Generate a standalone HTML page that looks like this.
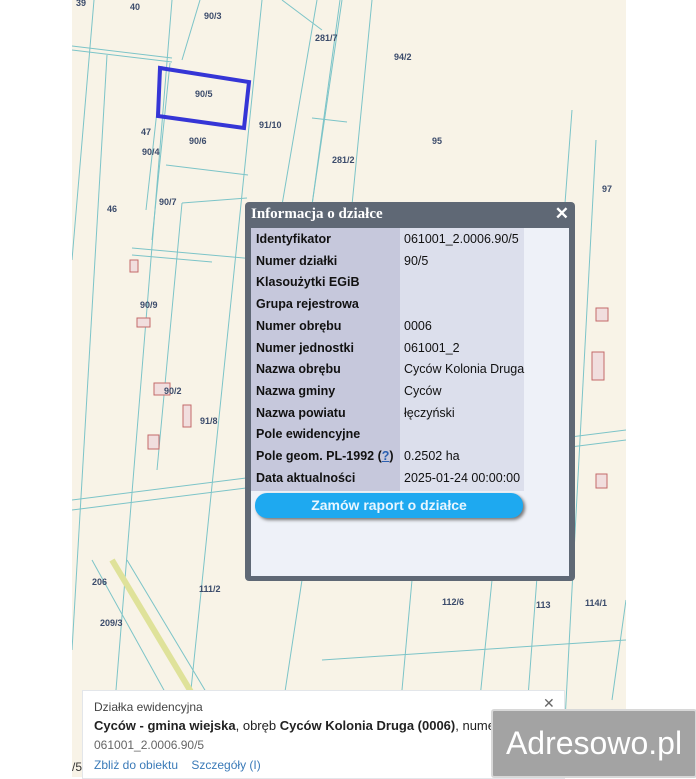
<!DOCTYPE html>
<html><head><meta charset="utf-8"><style>
body{margin:0;width:696px;height:777px;background:#fff;position:relative;overflow:hidden;font-family:"Liberation Sans",Arial,sans-serif}
.map{position:absolute;left:72px;top:0;width:554px;height:777px;background:#f8f3e7;overflow:hidden}
.pop{position:absolute;left:245px;top:202px;width:330px;height:379px;background:#5f6875;border-radius:4px}
.pop .t{position:absolute;left:6px;top:4px;color:#fff;font:bold 15px "Liberation Serif",serif}
.pop .x{position:absolute;right:6px;top:2px;color:#fff;font:bold 17px "Liberation Sans";}
.body{position:absolute;left:6px;top:26px;width:318px;height:348px;background:#eef1f8}
.lab{position:absolute;left:0;top:0;width:149px;height:263px;background:#c6c8dc}
.val{position:absolute;left:149px;top:0;width:124px;height:263px;background:#dcdfec}
.r{position:absolute;left:5px;font-size:12.5px;color:#111;height:21.7px;line-height:21.7px}
.lb{font-weight:bold}
.btn{position:absolute;left:4px;top:265px;width:268px;height:25px;background:#1ea9f0;border-radius:12px;color:#e8f6ff;font:bold 14px "Liberation Sans";text-align:center;line-height:25px;box-shadow:2px 2px 3px #777}
.info{position:absolute;left:82px;top:690px;width:481px;height:87px;background:#fff;border:1px solid #e3e6ea;font-size:12px;color:#333}
.logo{position:absolute;left:491px;top:709px;width:202px;height:65px;background:#a3a3a3;border:2px solid #d8d8d8;border-radius:3px;color:#fff;font-size:32px;line-height:65px;text-align:center}
.lbl{position:absolute;font:bold 9px "Liberation Sans";color:#3b4b6b}
</style></head><body>
<div class="map">
<svg width="554" height="777" style="position:absolute;left:0;top:0" stroke="#7cc4c8" fill="none" stroke-width="1">
<line x1="22" y1="0" x2="0" y2="260"/><line x1="35" y1="55" x2="0" y2="650"/>
<line x1="0" y1="50" x2="100" y2="62"/><line x1="0" y1="46" x2="100" y2="58"/>
<line x1="90" y1="66" x2="74" y2="210"/><line x1="98" y1="63" x2="80" y2="240"/>
<line x1="100" y1="0" x2="44" y2="690"/><line x1="128" y1="0" x2="110" y2="60"/>
<line x1="190" y1="0" x2="110" y2="777"/>
<line x1="94" y1="165" x2="176" y2="175"/><line x1="110" y1="203" x2="175" y2="198"/><line x1="110" y1="203" x2="85" y2="470"/>
<line x1="60" y1="248" x2="250" y2="265"/><line x1="60" y1="255" x2="140" y2="262"/>
<line x1="245" y1="0" x2="210" y2="205"/><line x1="268" y1="0" x2="240" y2="205"/>
<line x1="300" y1="0" x2="280" y2="205"/><line x1="210" y1="0" x2="250" y2="30"/>
<line x1="240" y1="118" x2="275" y2="122"/><line x1="270" y1="0" x2="240" y2="205"/>
<line x1="0" y1="500" x2="554" y2="430"/><line x1="0" y1="510" x2="554" y2="440"/>
<line x1="500" y1="110" x2="450" y2="777"/><line x1="524" y1="140" x2="490" y2="777"/>
<line x1="40" y1="560" x2="170" y2="777" stroke="#dfe29a" stroke-width="6"/>
<line x1="20" y1="560" x2="140" y2="777"/><line x1="55" y1="560" x2="185" y2="777"/>
<line x1="230" y1="580" x2="200" y2="777"/><line x1="340" y1="580" x2="330" y2="690"/>
<line x1="420" y1="580" x2="400" y2="777"/><line x1="554" y1="600" x2="540" y2="700"/>
<line x1="250" y1="660" x2="554" y2="640"/>
<polygon points="88,68 177,82 172,128 86,116" stroke="#3535d6" stroke-width="4"/>
<g stroke="#c36a6a" fill="#f1dede"><rect x="65" y="318" width="13" height="9"/><rect x="58" y="260" width="8" height="12"/><rect x="82" y="383" width="16" height="12"/><rect x="111" y="405" width="8" height="22"/><rect x="76" y="435" width="11" height="14"/><rect x="524" y="308" width="12" height="13"/><rect x="520" y="352" width="12" height="28"/><rect x="524" y="474" width="11" height="14"/></g>
</svg>
<span class="lbl" style="left:4px;top:-2px">39</span><span class="lbl" style="left:58px;top:2px">40</span><span class="lbl" style="left:132px;top:11px">90/3</span><span class="lbl" style="left:243px;top:33px">281/7</span><span class="lbl" style="left:322px;top:52px">94/2</span><span class="lbl" style="left:123px;top:89px">90/5</span><span class="lbl" style="left:187px;top:120px">91/10</span><span class="lbl" style="left:69px;top:127px">47</span><span class="lbl" style="left:70px;top:147px">90/4</span><span class="lbl" style="left:117px;top:136px">90/6</span><span class="lbl" style="left:260px;top:155px">281/2</span><span class="lbl" style="left:360px;top:136px">95</span><span class="lbl" style="left:530px;top:184px">97</span><span class="lbl" style="left:87px;top:197px">90/7</span><span class="lbl" style="left:35px;top:204px">46</span><span class="lbl" style="left:68px;top:300px">90/9</span><span class="lbl" style="left:92px;top:386px">90/2</span><span class="lbl" style="left:128px;top:416px">91/8</span><span class="lbl" style="left:20px;top:577px">206</span><span class="lbl" style="left:127px;top:584px">111/2</span><span class="lbl" style="left:28px;top:618px">209/3</span><span class="lbl" style="left:370px;top:597px">112/6</span><span class="lbl" style="left:464px;top:600px">113</span><span class="lbl" style="left:513px;top:598px">114/1</span>
</div>
<div class="pop"><div class="t">Informacja o działce</div><div class="x">✕</div>
<div class="body"><div class="lab"></div><div class="val"></div>
<div class="r lb" style="top:1px">Identyfikator</div><div class="r" style="left:153px;top:1px">061001_2.0006.90/5</div>
<div class="r lb" style="top:22.7px">Numer działki</div><div class="r" style="left:153px;top:22.7px">90/5</div>
<div class="r lb" style="top:44.4px">Klasoużytki EGiB</div>
<div class="r lb" style="top:66.1px">Grupa rejestrowa</div>
<div class="r lb" style="top:87.8px">Numer obrębu</div><div class="r" style="left:153px;top:87.8px">0006</div>
<div class="r lb" style="top:109.5px">Numer jednostki</div><div class="r" style="left:153px;top:109.5px">061001_2</div>
<div class="r lb" style="top:131.2px">Nazwa obrębu</div><div class="r" style="left:153px;top:131.2px">Cyców Kolonia Druga</div>
<div class="r lb" style="top:152.9px">Nazwa gminy</div><div class="r" style="left:153px;top:152.9px">Cyców</div>
<div class="r lb" style="top:174.6px">Nazwa powiatu</div><div class="r" style="left:153px;top:174.6px">łęczyński</div>
<div class="r lb" style="top:196.3px">Pole ewidencyjne</div>
<div class="r lb" style="top:218px">Pole geom. PL-1992 (<span style="color:#2a5fb0;text-decoration:underline">?</span>)</div><div class="r" style="left:153px;top:218px">0.2502 ha</div>
<div class="r lb" style="top:239.7px">Data aktualności</div><div class="r" style="left:153px;top:239.7px">2025-01-24 00:00:00</div>
<div class="btn">Zamów raport o działce</div>
</div></div>
<div class="info">
<div style="position:absolute;left:11px;top:9px;color:#444">Działka ewidencyjna</div>
<div style="position:absolute;left:11px;top:27px;white-space:nowrap;color:#222;font-size:13px"><b>Cyców - gmina wiejska</b>, obręb <b>Cyców Kolonia Druga (0006)</b>, numer</div>
<div style="position:absolute;left:11px;top:47px;color:#666">061001_2.0006.90/5</div>
<div style="position:absolute;left:11px;top:67px;color:#3a7ab8">Zbliż do obiektu &nbsp;&nbsp; Szczegóły (I)</div>
<div style="position:absolute;left:460px;top:4px;color:#666;font-size:14px">✕</div>
</div>
<div style="position:absolute;left:72px;top:760px;font-size:12px;color:#333">/5</div>
<div class="logo">Adresowo.pl</div>
</body></html>
